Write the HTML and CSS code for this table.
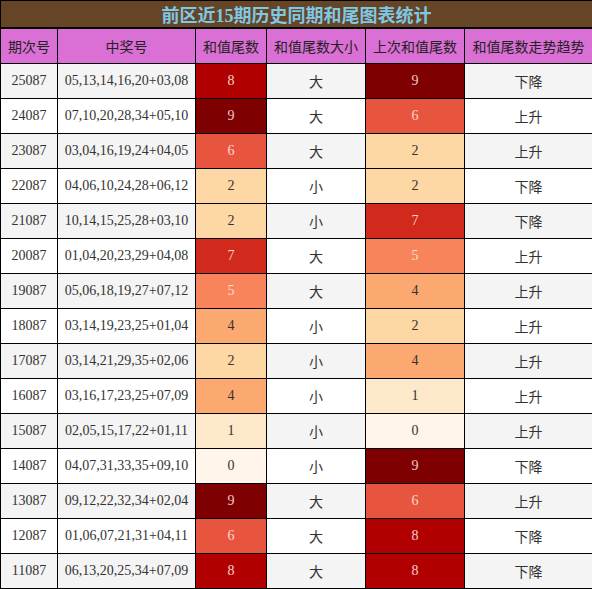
FILE: index.html
```html
<!DOCTYPE html>
<html lang="zh-CN">
  <head>
    <meta charset="UTF-8" />
    <meta name="viewport" content="width=device-width, initial-scale=1.0" />
    <title>前区近15期历史同期和尾图表统计</title>
    <link rel="stylesheet" href="styles.css">
  </head>
  <body>
    <table class="stats">
      <colgroup>
        <col class="c-issue" />
        <col class="c-nums" />
        <col class="c-tail" />
        <col class="c-size" />
        <col class="c-prev" />
        <col class="c-trend" />
      </colgroup>
      <thead>
        <tr class="title-row">
          <th colspan="6">前区近15期历史同期和尾图表统计</th>
        </tr>
        <tr class="head-row">
          <th>期次号</th>
          <th>中奖号</th>
          <th>和值尾数</th>
          <th>和值尾数大小</th>
          <th>上次和值尾数</th>
          <th>和值尾数走势趋势</th>
        </tr>
      </thead>
      <tbody>
        <tr><td>25087</td><td>05,13,14,16,20+03,08</td><td class="d8">8</td><td>大</td><td class="d9">9</td><td>下降</td></tr>
        <tr><td>24087</td><td>07,10,20,28,34+05,10</td><td class="d9">9</td><td>大</td><td class="d6">6</td><td>上升</td></tr>
        <tr><td>23087</td><td>03,04,16,19,24+04,05</td><td class="d6">6</td><td>大</td><td class="d2">2</td><td>上升</td></tr>
        <tr><td>22087</td><td>04,06,10,24,28+06,12</td><td class="d2">2</td><td>小</td><td class="d2">2</td><td>下降</td></tr>
        <tr><td>21087</td><td>10,14,15,25,28+03,10</td><td class="d2">2</td><td>小</td><td class="d7">7</td><td>下降</td></tr>
        <tr><td>20087</td><td>01,04,20,23,29+04,08</td><td class="d7">7</td><td>大</td><td class="d5">5</td><td>上升</td></tr>
        <tr><td>19087</td><td>05,06,18,19,27+07,12</td><td class="d5">5</td><td>大</td><td class="d4">4</td><td>上升</td></tr>
        <tr><td>18087</td><td>03,14,19,23,25+01,04</td><td class="d4">4</td><td>小</td><td class="d2">2</td><td>上升</td></tr>
        <tr><td>17087</td><td>03,14,21,29,35+02,06</td><td class="d2">2</td><td>小</td><td class="d4">4</td><td>上升</td></tr>
        <tr><td>16087</td><td>03,16,17,23,25+07,09</td><td class="d4">4</td><td>小</td><td class="d1">1</td><td>上升</td></tr>
        <tr><td>15087</td><td>02,05,15,17,22+01,11</td><td class="d1">1</td><td>小</td><td class="d0">0</td><td>上升</td></tr>
        <tr><td>14087</td><td>04,07,31,33,35+09,10</td><td class="d0">0</td><td>小</td><td class="d9">9</td><td>下降</td></tr>
        <tr><td>13087</td><td>09,12,22,32,34+02,04</td><td class="d9">9</td><td>大</td><td class="d6">6</td><td>上升</td></tr>
        <tr><td>12087</td><td>01,06,07,21,31+04,11</td><td class="d6">6</td><td>大</td><td class="d8">8</td><td>下降</td></tr>
        <tr><td>11087</td><td>06,13,20,25,34+07,09</td><td class="d8">8</td><td>大</td><td class="d8">8</td><td>下降</td></tr>
      </tbody>
    </table>
  </body>
</html>
```

FILE: styles.css
```css
body {
  margin: 0;
  background: #fff;
  font-family: "Liberation Serif", "Noto Sans CJK SC", serif;
  color: #333;
}

.stats {
  width: 592px;
  table-layout: fixed;
  border-collapse: collapse;
  font-size: 14px;
}

.c-issue { width: 57px; }
.c-nums { width: 138px; }
.c-tail { width: 71px; }
.c-size { width: 99px; }
.c-prev { width: 99px; }
.c-trend { width: 128px; }

.stats th,
.stats td {
  border: 1px solid #000;
  padding: 0;
  text-align: center;
  vertical-align: middle;
}

.title-row th {
  height: 26px;
  background: #664526;
  color: #7ec8e6;
  font-size: 18px;
  font-weight: bold;
  border-bottom-width: 2px;
}

.head-row th {
  height: 34px;
  background: #da6fd5;
  color: #222;
  font-weight: normal;
  font-family: "Noto Sans CJK SC", sans-serif;
}

.stats td {
  height: 34px;
}

.stats tbody tr:nth-child(odd) {
  background: #f4f4f4;
}

.stats tbody tr:nth-child(even) {
  background: #fff;
}

/* digit heat colours */
.d0 { background: #fff5eb; }
.d1 { background: #fee8ca; }
.d2 { background: #fdd7a4; }
.d3 { background: #fdc08a; }
.d4 { background: #fca871; }
.d5 { background: #f7845a; color: #fde0d8; }
.d6 { background: #e8553f; color: #fdd8d0; }
.d7 { background: #d1291b; color: #fcd0c8; }
.d8 { background: #b00000; color: #f8d0d0; }
.d9 { background: #7f0000; color: #f0c8c8; }
```
